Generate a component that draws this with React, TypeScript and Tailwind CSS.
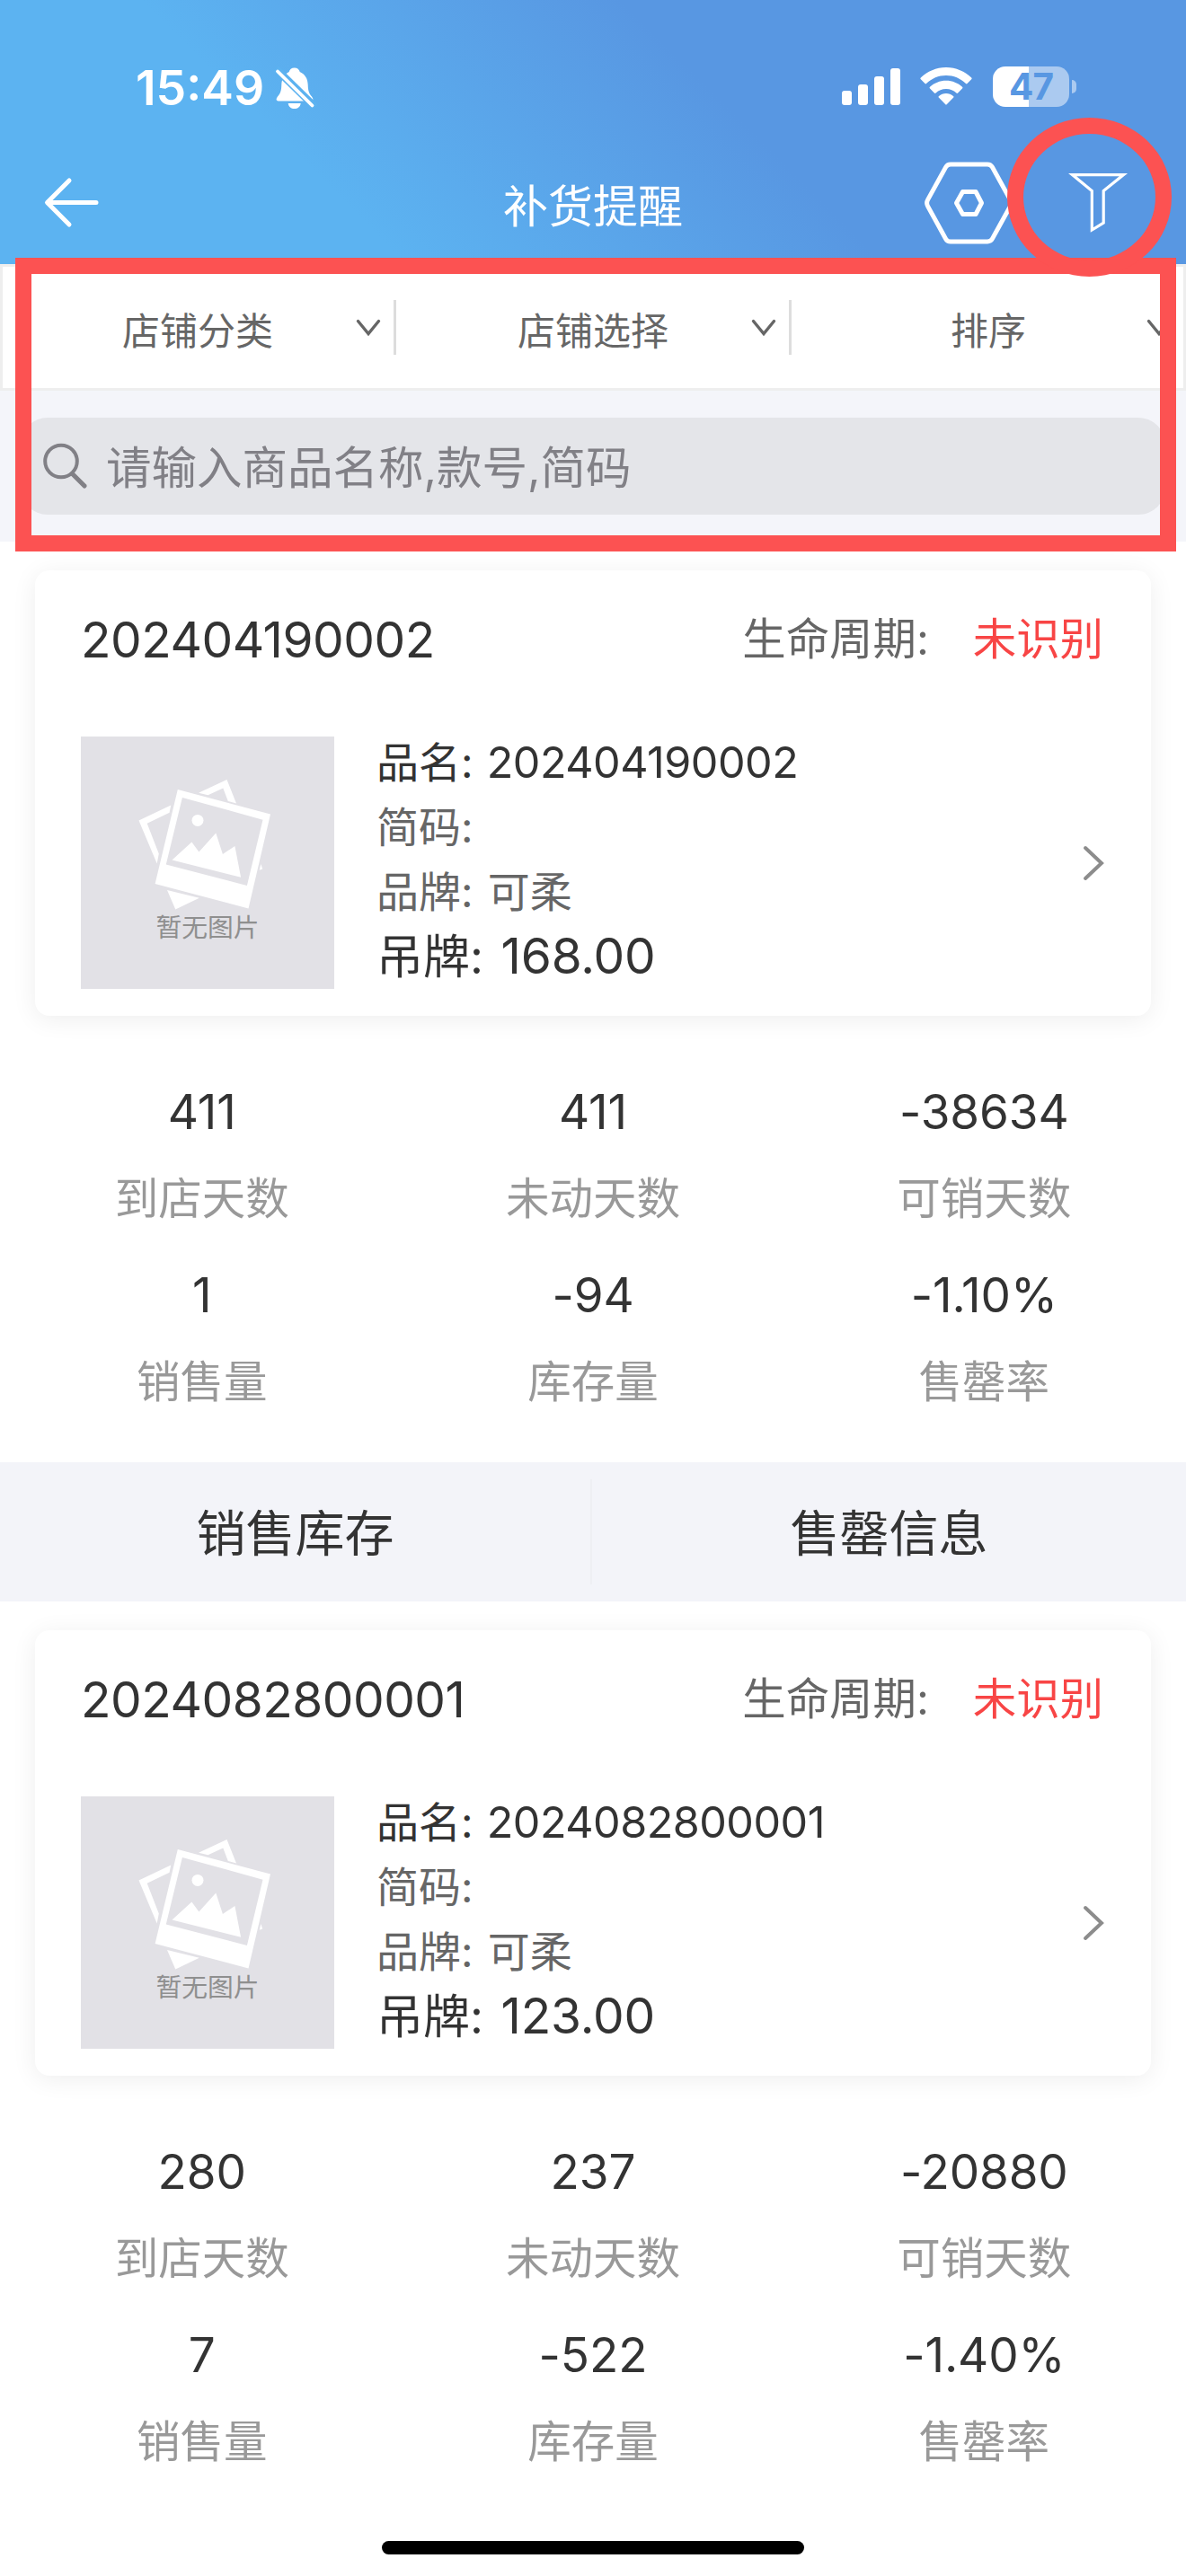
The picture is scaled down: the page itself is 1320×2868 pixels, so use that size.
interface Stat {
  value: string;
  label: string;
}

interface Goods {
  code: string;
  brand: string;
  price: string;
  stats: Stat[];
  showTabs: boolean;
}

const filters = ["店铺分类", "店铺选择", "排序"];

const goodsList: Goods[] = [
  {
    code: "202404190002",
    brand: "可柔",
    price: "168.00",
    showTabs: true,
    stats: [
      { value: "411", label: "到店天数" },
      { value: "411", label: "未动天数" },
      { value: "-38634", label: "可销天数" },
      { value: "1", label: "销售量" },
      { value: "-94", label: "库存量" },
      { value: "-1.10%", label: "售罄率" },
    ],
  },
  {
    code: "2024082800001",
    brand: "可柔",
    price: "123.00",
    showTabs: false,
    stats: [
      { value: "280", label: "到店天数" },
      { value: "237", label: "未动天数" },
      { value: "-20880", label: "可销天数" },
      { value: "7", label: "销售量" },
      { value: "-522", label: "库存量" },
      { value: "-1.40%", label: "售罄率" },
    ],
  },
];

function StatusBar() {
  return (
    <div className="flex h-[156px] items-start pl-[151px] pr-[122px] pt-[68px] text-white">
      <div className="h-[60px] w-[146px] whitespace-nowrap text-[53.500px] font-semibold leading-[60px]">
        15:49
      </div>
      <svg className="ml-[8px] mt-[6px]" width="48" height="50" viewBox="0 0 48 50" fill="none">
        <path
          d="M22.700 1.500c-3.300 0-5.400 2-6 4.500C11 9 8.500 14 8.300 20.500c-.2 7-1.300 9.500-4.300 13-2.500 3.300-1.500 5 2 5h34c3.500 0 4.500-1.700 2-5-3-3.500-4.100-6-4.300-13C37.500 14 35 9 28.700 6c-.6-2.500-2.700-4.500-6-4.500z"
          fill="#fff"
        />
        <path d="M15.700 41h14c-.6 4-3.300 6-7 6s-6.400-2-7-6z" fill="#fff" />
        <path d="M2 2.500l44 43" stroke="#5cb2f0" strokeWidth="8.500" />
        <path d="M4 5.500l38.500 38" stroke="#fff" strokeWidth="3.800" strokeLinecap="round" />
      </svg>
      <div className="ml-auto flex items-start pt-[6px]">
        <svg className="mt-[2px]" width="65" height="41" viewBox="0 0 65 41" fill="#fff">
          <rect x="0" y="25" width="11" height="16" rx="3" />
          <rect x="18" y="18" width="11" height="23" rx="3" />
          <rect x="36" y="9" width="11" height="32" rx="3" />
          <rect x="54" y="0" width="11" height="41" rx="3" />
        </svg>
        <svg className="ml-[22px] mt-[1px]" width="58" height="42" viewBox="0 0 58 42" fill="#fff">
          <path d="M29 0C18 0 8 4.500.8 11.500c-.6.600-.6 1.200 0 1.800l4.700 4.800c.5.500 1 .5 1.500 0C13 12.300 20.600 9 29 9s16 3.300 22 9.100c.5.500 1 .5 1.500 0l4.700-4.800c.6-.6.6-1.200 0-1.800C50 4.500 40 0 29 0z" />
          <path d="M29 14.800c-7 0-13.300 2.700-18 7-.6.600-.6 1.200 0 1.800l4.900 4.900c.6.600 1.100.6 1.700 0 3-2.900 6.900-4.500 11.400-4.500s8.400 1.600 11.400 4.500c.6.600 1.100.6 1.700 0l4.900-4.900c.6-.6.600-1.200 0-1.800-4.700-4.300-11-7-18-7z" />
          <path d="M29 29c-3 0-5.800 1.100-8 3-.7.600-.7 1.200 0 1.800l7.300 7.500c.5.500.9.5 1.400 0l7.300-7.500c.7-.6.7-1.200 0-1.800-2.200-1.900-5-3-8-3z" />
        </svg>
        <div className="ml-[23px] flex items-center">
          <div className="flex h-[45px] w-[85px] items-center justify-center rounded-[14px] bg-[linear-gradient(90deg,#fff_47%,#abcaf0_47%)] text-[40.500px] font-bold leading-[45px] tracking-[-1px] text-[#5897e2]">
            47
          </div>
          <div className="ml-[3px] h-[15px] w-[5px] rounded-r-full bg-[#abcaf0]" />
        </div>
      </div>
    </div>
  );
}

function NavBar() {
  return (
    <div className="grid h-[138px] grid-cols-[1fr_auto_1fr] items-start">
      <svg className="ml-[48px] mt-[41px]" width="62" height="58" viewBox="0 0 62 58" fill="none">
        <path
          d="M59 28.500H5M29 4L4.500 28.500 29 53"
          stroke="#fff"
          strokeWidth="5"
          strokeLinecap="round"
          strokeLinejoin="round"
        />
      </svg>
      <h1 className="mt-[40px] h-[68px] text-[50px] font-normal leading-[68px] text-white">
        补货提醒
      </h1>
      <div className="flex justify-end pr-[64px]">
        <svg className="mt-[23px]" width="100" height="94" viewBox="0 0 100 94" fill="none" stroke="#fff">
          <path
            d="M30 4h41c2.500 0 4.200 1 5.400 3.100l20 36.300c1.400 2.500 1.400 4.700 0 7.200l-20 36.300c-1.200 2.100-2.900 3.100-5.400 3.100H30c-2.500 0-4.200-1-5.400-3.100l-20-36.300c-1.400-2.500-1.400-4.700 0-7.200l20-36.300C25.800 5 27.500 4 30 4z"
            strokeWidth="5"
          />
          <path
            d="M43.500 34.500h14.500L64.500 47 58 59.500H43.500L36.500 47z"
            strokeWidth="5"
            strokeLinejoin="round"
          />
        </svg>
        <svg className="ml-[60px] mt-[36px]" width="68" height="68" viewBox="0 0 68 68" fill="none">
          <path
            d="M5.500 2.600h57L40.200 20.500v35.700L27.300 64V20.500z"
            stroke="#fff"
            strokeWidth="3.200"
          />
        </svg>
      </div>
    </div>
  );
}

function FilterBar() {
  return (
    <div className="h-[141px] border-[3px] border-[#eee] bg-white">
      <div className="-mx-[3px] flex">
        {filters.map((name, idx) => (
          <div key={name} className="relative h-[135px] flex-1">
            <div className="mt-[4px] text-center text-[42px] leading-[135px] text-[#666]">
              {name}
            </div>
            <svg
              className="absolute right-[16px] top-[57px]"
              width="28"
              height="22"
              viewBox="0 0 28 22"
              fill="none"
            >
              <path d="M2.500 3.500l11.500 14 11.500-14" stroke="#666" strokeWidth="3.400" strokeLinecap="round" />
            </svg>
            {idx < 2 && (
              <div className="absolute right-[-1px] top-[37px] h-[61px] w-[3px] bg-[#ddd]" />
            )}
          </div>
        ))}
      </div>
    </div>
  );
}

function SearchBox() {
  return (
    <div className="h-[168px] bg-[#f4f5fa] px-[23px] pt-[30px]">
      <div className="flex h-[108px] items-center rounded-[30px] bg-[#e4e5e9] pl-[24px]">
        <svg width="52" height="52" viewBox="0 0 52 52" fill="none" stroke="#818086">
          <circle cx="21" cy="20.500" r="17.800" strokeWidth="4" />
          <path d="M33.500 34.500L47 48" strokeWidth="5.200" strokeLinecap="round" />
        </svg>
        <span className="ml-[19px] mt-[3px] text-[50.500px] leading-[108px] text-[#818086]">
          请输入商品名称,款号,简码
        </span>
      </div>
    </div>
  );
}

function EmptyImage() {
  return (
    <div className="relative mt-[33px] h-[281px] w-[282px] bg-[#e2e1e6]">
      <svg width="282" height="281" viewBox="0 0 282 281" fill="#fff">
        <path d="M131 62.700L162.500 48l10.500 26.500-9.200-2.500-5.500-14.400-16.800 7.600z" />
        <path d="M64.500 93.400l35.700-16.900-1.600 8.300-24.900 12 13.100 33.800-2.100 11z" />
        <path d="M96 170.900l35.800 8.900-26.500 12.800z" />
        <path d="M200.400 142l1.800 5.500-3.500 1.300z" />
        <path
          fillRule="evenodd"
          d="M107.800 59L211 86.500l-24.500 105L82.600 164zM112.900 67.900L94.800 142.600l90.100 23.400 17.600-73.300z"
        />
        <circle cx="130" cy="93.400" r="6.500" />
        <path d="M101.500 137.500l21.900-20 8 11 18.900-21 7.600 23.400 13.500-8.900 6.700 34.700z" />
      </svg>
      <div className="absolute inset-x-0 top-[193px] text-center text-[28.800px] leading-[40px] text-[#8f8f8f]">
        暂无图片
      </div>
    </div>
  );
}

function GoodsItem({ data }: { data: Goods }) {
  return (
    <section className="pt-[32px]">
      <div className="mx-[39px] h-[496px] rounded-[16px] bg-white px-[51px] shadow-[0_4px_28px_rgba(0,0,0,0.07)]">
        <div className="flex h-[152px] items-center pt-[3px]">
          <div className="text-[55px] tracking-[-0.500px] text-[#333]">{data.code}</div>
          <div className="ml-auto flex text-[48.400px] text-[#666]">
            生命周期:
            <span className="ml-[49px] mr-[2px] text-[#f84545]">未识别</span>
          </div>
        </div>
        <div className="flex">
          <EmptyImage />
          <div className="ml-[47px] mt-[26px] flex-1 whitespace-pre text-[47px] leading-[72px] text-[#666]">
            <div className="text-[#333]">
              品名: <span className="ml-[2px] text-[48.500px] tracking-[-0.500px]">{data.code}</span>
            </div>
            <div>简码:</div>
            <div>
              品牌: <span className="ml-[3px]">{data.brand}</span>
            </div>
            <div className="-mt-px text-[52px] text-[#333]">
              吊牌: <span className="ml-[5px] text-[55px] tracking-[-0.200px]">{data.price}</span>
            </div>
          </div>
          <svg className="-mr-[2px] mt-[154px]" width="28" height="40" viewBox="0 0 28 40" fill="none">
            <path d="M4 3l18 17L4 37" stroke="#8c8c8c" strokeWidth="4" strokeLinecap="round" />
          </svg>
        </div>
      </div>
      <div className="mx-[7px] grid h-[497px] grid-cols-3 content-start gap-y-[12px] pt-[56px]">
        {data.stats.map((stat) => (
          <div key={stat.label} className="text-center">
            <div className="text-[53px] leading-[103px] tracking-[-0.100px] text-[#333]">
              {stat.value}
            </div>
            <div className="text-[48.500px] leading-[89px] text-[#999]">{stat.label}</div>
          </div>
        ))}
      </div>
      {data.showTabs && (
        <div className="flex h-[155px] items-center bg-[#f3f4f9] text-[55px] leading-[117px] text-[#333]">
          <div className="w-[657px] pt-[3px] text-center">销售库存</div>
          <div className="h-[117px] w-[2px] bg-[#eeeff3]" />
          <div className="flex-1 pt-[3px] text-center">售罄信息</div>
        </div>
      )}
    </section>
  );
}

function App() {
  return (
    <div className="relative h-[2868px] w-[1320px] overflow-hidden bg-white font-['Inter','Noto_Sans_CJK_SC',sans-serif]">
      <header className="h-[294px] bg-[linear-gradient(45deg,#5cb3f1_28%,#5897e2_61%)]">
        <StatusBar />
        <NavBar />
      </header>
      <FilterBar />
      <SearchBox />
      {goodsList.map((item) => (
        <GoodsItem key={item.code} data={item} />
      ))}

      {/* highlight marks over the filter button and search area */}
      <div className="absolute left-[17px] top-[287px] h-[327px] w-[1292px] border-[18px] border-[#fc5252]" />
      <div className="absolute left-[1121px] top-[131px] h-[177px] w-[183px] rounded-[50%] border-[18px] border-[#fc5252]" />

      <div className="absolute left-[425px] top-[2829px] h-[15px] w-[470px] rounded-full bg-black" />
    </div>
  );
}

export default App;
